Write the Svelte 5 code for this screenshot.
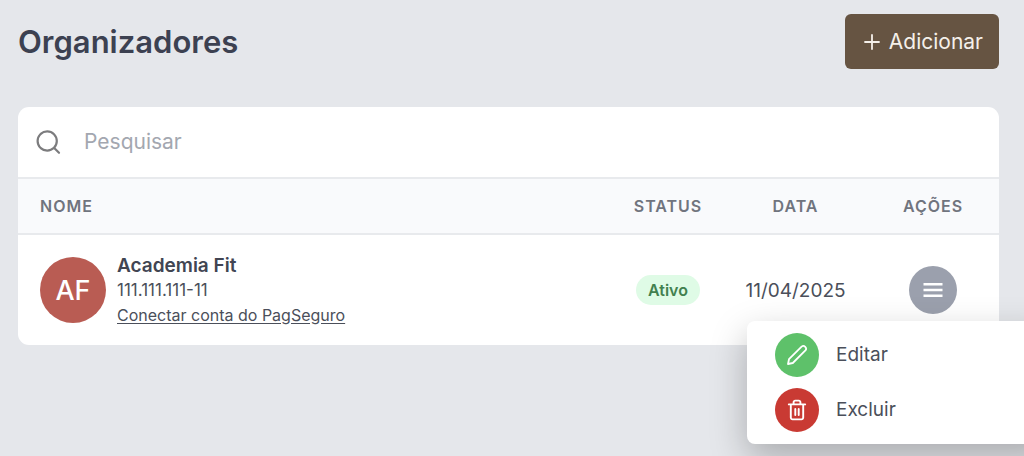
<script lang="ts">
  const organizers = [
    {
      initials: 'AF',
      name: 'Academia Fit',
      document: '111.111.111-11',
      status: 'Ativo',
      date: '11/04/2025'
    }
  ];
  let openRow = $state(0);
  let query = $state('');
  const visible = $derived(
    organizers.filter((o) => o.name.toLowerCase().includes(query.toLowerCase()))
  );
</script>

<main>
  <header>
    <h1>Organizadores</h1>
    <button class="add" type="button">
      <svg width="16" height="16" viewBox="0 0 16 16" aria-hidden="true">
        <path d="M8 1v14M1 8h14" stroke="currentColor" stroke-width="1.8" stroke-linecap="round" />
      </svg>
      Adicionar
    </button>
  </header>

  <section class="card">
    <div class="search">
      <label for="search" aria-label="Pesquisar">
        <svg width="26" height="26" viewBox="0 0 26 26" fill="none" stroke="currentColor" stroke-width="2.2" stroke-linecap="round" aria-hidden="true">
          <circle cx="11.2" cy="12" r="9.6" />
          <path d="M18.2 19 23 23.8" />
        </svg>
      </label>
      <input id="search" type="text" placeholder="Pesquisar" bind:value={query} />
    </div>

    <table>
      <thead>
        <tr>
          <th class="name-col">Nome</th>
          <th class="status-col">Status</th>
          <th class="date-col">Data</th>
          <th class="actions-col">Ações</th>
        </tr>
      </thead>
      <tbody>
        {#each visible as row, i}
          <tr>
            <td class="name-col">
              <div class="person">
                <span class="avatar">{row.initials}</span>
                <div class="info">
                  <strong>{row.name}</strong>
                  <span class="document">{row.document}</span>
                  <a href="#pagseguro">Conectar conta do PagSeguro</a>
                </div>
              </div>
            </td>
            <td><span class="badge">{row.status}</span></td>
            <td class="date">{row.date}</td>
            <td>
              <div class="actions">
                <button
                  class="round toggle"
                  type="button"
                  aria-label="Ações"
                  aria-expanded={openRow === i}
                  onclick={() => (openRow = openRow === i ? -1 : i)}
                >
                  <svg width="20" height="16" viewBox="0 0 20 16" aria-hidden="true">
                    <path d="M0.5 2.2h19M0.5 8h19M0.5 13.8h19" stroke="currentColor" stroke-width="2.6" />
                  </svg>
                </button>
                {#if openRow === i}
                  <div class="menu">
                    <button class="item" type="button">
                      <span class="round edit">
                        <svg width="22" height="22" viewBox="0 0 22 22" fill="none" stroke="currentColor" stroke-width="1.8" stroke-linejoin="round" aria-hidden="true">
                          <path d="M2 20 3 15.2 15.6 2.6a2.7 2.7 0 0 1 3.8 3.8L6.8 19Z" />
                        </svg>
                      </span>
                      Editar
                    </button>
                    <button class="item" type="button">
                      <span class="round delete">
                        <svg width="20" height="22" viewBox="0 0 20 22" fill="none" stroke="currentColor" stroke-width="1.9" stroke-linecap="round" stroke-linejoin="round" aria-hidden="true">
                          <path d="M1.8 5.4h16.4M3.8 5.4v13.2a1.8 1.8 0 0 0 1.8 1.8h8.8a1.8 1.8 0 0 0 1.8-1.8V5.4M6.6 5.2V3.2a1.6 1.6 0 0 1 1.6-1.6h3.6a1.6 1.6 0 0 1 1.6 1.6v2M8.3 10v6M11.7 10v6" />
                        </svg>
                      </span>
                      Excluir
                    </button>
                  </div>
                {/if}
              </div>
            </td>
          </tr>
        {/each}
      </tbody>
    </table>
  </section>
</main>

<style>
  :global(body) {
    margin: 0;
    background: #e5e7eb;
    overflow-x: hidden;
  }
  main {
    box-sizing: border-box;
    min-height: 100vh;
    padding: 14px 25px 14px 18px;
    overflow: hidden;
    background: #e5e7eb;
    color: #4b4f5a;
    font-family: Inter, "Liberation Sans", sans-serif;
  }
  button,
  input {
    font-family: inherit;
    border: 0;
  }
  button {
    cursor: pointer;
  }
  svg {
    display: block;
  }
  header {
    display: flex;
    align-items: center;
    justify-content: space-between;
    margin-bottom: 38px;
  }
  h1 {
    margin: 0;
    font-size: 31px;
    line-height: 41px;
    font-weight: 600;
    color: #3c4151;
  }
  .add {
    display: flex;
    align-items: center;
    gap: 9px;
    padding: 0 16px 0 19px;
    border-radius: 6px;
    background: #665442;
    color: #f5f0ea;
    font-size: 21px;
    line-height: 55px;
  }
  .card {
    border-radius: 11px;
    background: #fff;
  }
  .search {
    display: flex;
    align-items: center;
    gap: 22px;
    height: 70px;
    padding: 0 18px;
    color: #7c7c7e;
  }
  .search input {
    flex: 1;
    min-width: 0;
    padding: 0;
    background: transparent;
    font-size: 21px;
    line-height: 32px;
    color: #4b4f5a;
    outline: none;
  }
  .search input::placeholder {
    color: #a3a7b0;
    opacity: 1;
  }
  table {
    width: 100%;
    border-collapse: separate;
    border-spacing: 0;
  }
  th {
    padding: 0;
    height: 54px;
    border-top: 2px solid #e8eaed;
    border-bottom: 2px solid #e8eaed;
    background: #f9fafc;
    color: #70747e;
    font-size: 16px;
    font-weight: 600;
    letter-spacing: 1px;
    text-transform: uppercase;
  }
  .status-col {
    width: 112px;
  }
  .date-col {
    width: 143px;
  }
  .actions-col {
    width: 132px;
  }
  td {
    padding: 0;
    height: 110px;
    text-align: center;
  }
  .name-col {
    padding-left: 22px;
    text-align: left;
  }
  .person {
    display: flex;
    align-items: center;
    gap: 11px;
  }
  .avatar {
    display: grid;
    place-items: center;
    width: 66px;
    height: 66px;
    border-radius: 50%;
    background: #b95c53;
    color: #fff;
    font-size: 27px;
    font-weight: 500;
  }
  .info {
    display: flex;
    flex-direction: column;
    align-items: flex-start;
    font-size: 16px;
    line-height: 25px;
  }
  .info strong {
    font-size: 19px;
    font-weight: 600;
    color: #414552;
  }
  .info .document {
    font-size: 17px;
  }
  .info a {
    color: inherit;
    text-underline-offset: 2px;
  }
  .badge {
    display: inline-block;
    padding: 0 12px;
    border-radius: 15px;
    background: #dffbe6;
    color: #42804f;
    font-size: 16px;
    font-weight: 600;
    line-height: 30px;
  }
  .date {
    font-size: 19px;
  }
  .actions {
    position: relative;
    width: 48px;
    margin: 0 auto;
  }
  .round {
    display: grid;
    place-items: center;
    width: 44px;
    height: 44px;
    padding: 0;
    border-radius: 50%;
    color: #fff;
  }
  .toggle {
    width: 48px;
    height: 48px;
    background: #9ba0ad;
  }
  .menu {
    position: absolute;
    top: 55px;
    left: -162px;
    width: 308px;
    padding: 6px 0 7px;
    border-radius: 8px;
    background: #fff;
    box-shadow: 0 14px 36px rgba(0, 0, 0, 0.26);
  }
  .item {
    display: flex;
    align-items: center;
    gap: 17px;
    width: 100%;
    height: 55px;
    padding: 0 28px;
    background: transparent;
    color: #4b4f5a;
    font-size: 19px;
  }
  .edit {
    background: #5ec16a;
  }
  .delete {
    background: #c93a33;
  }
</style>
